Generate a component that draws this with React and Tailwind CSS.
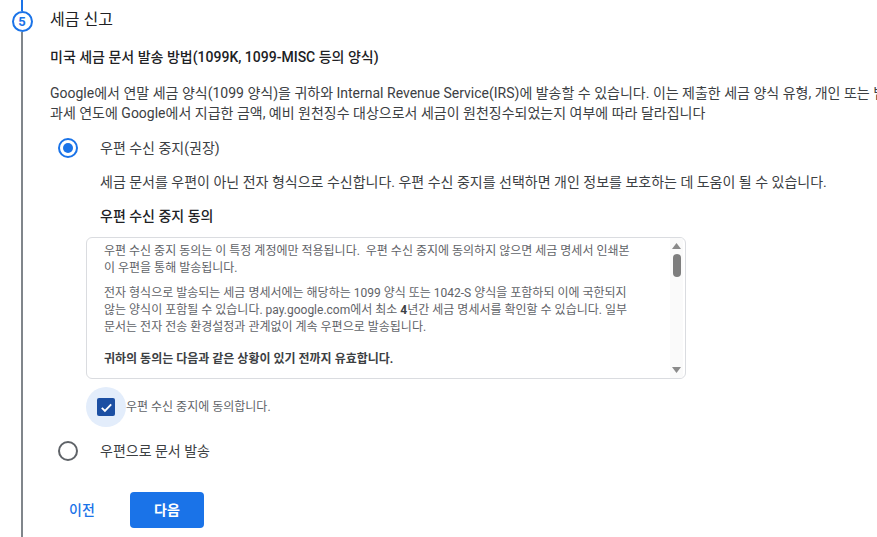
import React from "react";

function Radio({ checked }) {
  return (
    <div className={`flex h-[20px] w-[20px] items-center justify-center rounded-full border-2 ${checked ? "border-[#1a73e8]" : "border-[#5f6368]"}`}>
      {checked && <div className="h-[10px] w-[10px] rounded-full bg-[#1a73e8]" />}
    </div>
  );
}

export default function App() {
  return (
    <div className="flex h-[537px] w-[877px] overflow-hidden bg-white font-['Roboto','Noto_Sans_CJK_KR',sans-serif] text-[#3c4043]">
      {/* stepper */}
      <div className="flex w-[44px] shrink-0 flex-col items-center">
        <div className="h-[11px] w-[2px] bg-[#1a73e8]" />
        <div className="flex h-[21px] w-[21px] items-center justify-center rounded-full border-2 border-[#1a73e8] text-[13px] font-bold leading-none text-[#1a73e8]">5</div>
        <div className="w-[2px] flex-1 bg-[#80868b]" />
      </div>

      {/* content */}
      <div className="flex w-[1100px] shrink-0 flex-col pl-[6px] pt-[8px]">
        <div className="text-[16px] leading-[24px] text-[#202124]">세금 신고</div>
        <div className="mt-[15px] text-[14px] font-medium leading-[20px] text-[#202124]">미국 세금 문서 발송 방법(1099K, 1099-MISC 등의 양식)</div>
        <div className="mt-[16px] whitespace-nowrap text-[14px] leading-[20px] text-[#3c4043]">
          <div>Google에서 연말 세금 양식(1099 양식)을 귀하와 Internal Revenue Service(IRS)에 발송할 수 있습니다. 이는 제출한 세금 양식 유형, 개인 또는 법인 여부, 해당</div>
          <div>과세 연도에 Google에서 지급한 금액, 예비 원천징수 대상으로서 세금이 원천징수되었는지 여부에 따라 달라집니다</div>
        </div>

        <div className="mt-[5px] flex h-[40px] items-center pl-[8px]">
          <Radio checked />
          <span className="ml-[22px] text-[14px] leading-[20px] text-[#3c4043]">우편 수신 중지(권장)</span>
        </div>

        <div className="pl-[50px]">
          <div className="mt-[4px] text-[14px] leading-[20px] text-[#3c4043]">세금 문서를 우편이 아닌 전자 형식으로 수신합니다. 우편 수신 중지를 선택하면 개인 정보를 보호하는 데 도움이 될 수 있습니다.</div>
          <div className="mt-[14px] text-[14px] font-medium leading-[20px] text-[#202124]">우편 수신 중지 동의</div>
        </div>

        <div className="ml-[36px] mt-[11px] flex h-[142px] w-[600px] overflow-hidden rounded-[6px] border border-[#dadce0]">
          <div className="flex-1 whitespace-nowrap pl-[17px] pt-[5px] text-[12px] leading-[17px] text-[#5f6368]">
            <div>우편 수신 중지 동의는 이 특정 계정에만 적용됩니다.&nbsp; 우편 수신 중지에 동의하지 않으면 세금 명세서 인쇄본</div>
            <div>이 우편을 통해 발송됩니다.</div>
            <div className="mt-[8px]">전자 형식으로 발송되는 세금 명세서에는 해당하는 1099 양식 또는 1042-S 양식을 포함하되 이에 국한되지</div>
            <div>않는 양식이 포함될 수 있습니다. pay.google.com에서 최소 <b className="text-[#3c4043]">4</b>년간 세금 명세서를 확인할 수 있습니다. 일부</div>
            <div>문서는 전자 전송 환경설정과 관계없이 계속 우편으로 발송됩니다.</div>
            <div className="mt-[15px] font-bold text-[#3c4043]">귀하의 동의는 다음과 같은 상황이 있기 전까지 유효합니다.</div>
          </div>
          <div className="mr-[2px] flex w-[13px] flex-col items-center bg-[#fafafa] py-[4px]">
            <svg width="9" height="6" viewBox="0 0 9 6" className="mt-[1px]"><path d="M4.5 0 L9 6 L0 6 Z" fill="#8a8a8a" /></svg>
            <div className="mt-[5px] h-[23px] w-[8px] rounded-full bg-[#7d7d7d]" />
            <div className="flex-1" />
            <svg width="9" height="6" viewBox="0 0 9 6" className="mb-[1px]"><path d="M0 0 L9 0 L4.5 6 Z" fill="#8a8a8a" /></svg>
          </div>
        </div>

        <div className="ml-[36px] mt-[8px] flex items-center">
          <div className="flex h-[40px] w-[40px] items-center justify-center rounded-full bg-[#e3edfb]">
            <div className="flex h-[18px] w-[18px] items-center justify-center rounded-[2px] bg-[#1c4fa3]">
              <svg width="15" height="15" viewBox="0 0 24 24" fill="none"><path d="M4.5 12.5 L9.5 17.5 L19.5 7" stroke="white" strokeWidth="3" /></svg>
            </div>
          </div>
          <span className="text-[12px] leading-[16px] text-[#5f6368]">우편 수신 중지에 동의합니다.</span>
        </div>

        <div className="mt-[4px] flex h-[40px] items-center pl-[8px]">
          <Radio />
          <span className="ml-[22px] text-[14px] leading-[20px] text-[#3c4043]">우편으로 문서 발송</span>
        </div>

        <div className="mt-[21px] flex items-center gap-[16px]">
          <button className="flex h-[36px] w-[64px] items-center justify-center rounded-[4px] text-[14px] font-medium text-[#1a73e8]">이전</button>
          <button className="flex h-[36px] w-[74px] items-center justify-center rounded-[4px] bg-[#1a73e8] text-[14px] font-bold text-white">다음</button>
        </div>
      </div>
    </div>
  );
}
